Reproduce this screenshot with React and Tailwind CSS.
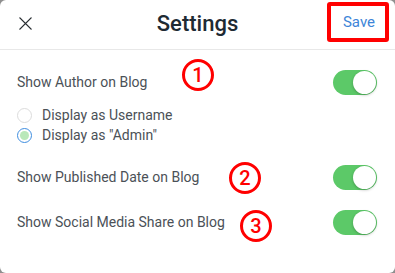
import React from 'react';

const Toggle = () => (
  <div className="w-[44px] h-[25px] rounded-full bg-[#5cc968] flex items-center justify-end pr-[1px]">
    <div className="w-[23px] h-[23px] rounded-full bg-white shadow-[0_1px_3px_rgba(0,0,0,0.25)]" />
  </div>
);

const Marker = ({ n, className }) => (
  <div
    className={`absolute w-[32px] h-[32px] rounded-full border-[3px] border-[#ff0000] flex items-center justify-center text-[#ff0000] text-[20px] font-medium leading-none ${className}`}
  >
    {n}
  </div>
);

const Radio = ({ checked, label }) => (
  <div className="flex items-center h-[20px]">
    {checked ? (
      <div className="w-[15px] h-[15px] rounded-full border border-[#3f8ee0] flex items-center justify-center">
        <div className="w-[9px] h-[9px] rounded-full bg-[#b9e8b9]" />
      </div>
    ) : (
      <div className="w-[15px] h-[15px] rounded-full border border-[#dcdcdc]" />
    )}
    <span className="ml-[10px] text-[14px] text-[#4b5157]">{label}</span>
  </div>
);

const Row = ({ label, children }) => (
  <div className="relative flex items-center justify-between h-[25px]">
    <span className="text-[14px] text-[#4b5157]">{label}</span>
    {children}
    <Toggle />
  </div>
);

export default function App() {
  return (
    <div className="w-[395px] h-[273px] bg-[#8f8f8f]" style={{ fontFamily: 'Roboto, "Liberation Sans", sans-serif' }}>
      <div className="w-full h-full bg-white rounded-[6px] overflow-hidden">
        {/* header */}
        <div className="relative h-[50px] border-b border-[#e8e8e8] flex items-center justify-between pl-[18px] pr-[6px]">
          <svg width="15" height="15" viewBox="0 0 16 16" className="mt-[-2px]">
            <path d="M2 2 L14 14 M14 2 L2 14" stroke="#2a2f33" strokeWidth="1.5" strokeLinecap="round" />
          </svg>
          <h1 className="absolute left-0 right-0 text-center text-[22px] font-medium text-[#1e2a33] pointer-events-none mt-[-3px]">
            Settings
          </h1>
          <div className="w-[62px] h-[40px] border-[4px] border-[#ff0000] rounded-[3px] flex items-center justify-center mt-[-5px]">
            <span className="text-[15px] text-[#3d85d8] ml-[2px]">Save</span>
          </div>
        </div>

        {/* content */}
        <div className="px-[17px] pr-[18px] pt-[20px] flex flex-col">
          <Row label="Show Author on Blog">
            <Marker n="1" className="left-[165px] top-[-11px]" />
          </Row>
          <div className="mt-[10px] flex flex-col">
            <Radio label="Display as Username" />
            <Radio checked label={'Display as "Admin"'} />
          </div>
          <div className="mt-[20px]">
            <Row label="Show Published Date on Blog">
              <Marker n="2" className="left-[212px] top-[-3px]" />
            </Row>
          </div>
          <div className="mt-[20px]">
            <Row label="Show Social Media Share on Blog">
              <Marker n="3" className="left-[223px] top-[0px]" />
            </Row>
          </div>
        </div>
      </div>
    </div>
  );
}
